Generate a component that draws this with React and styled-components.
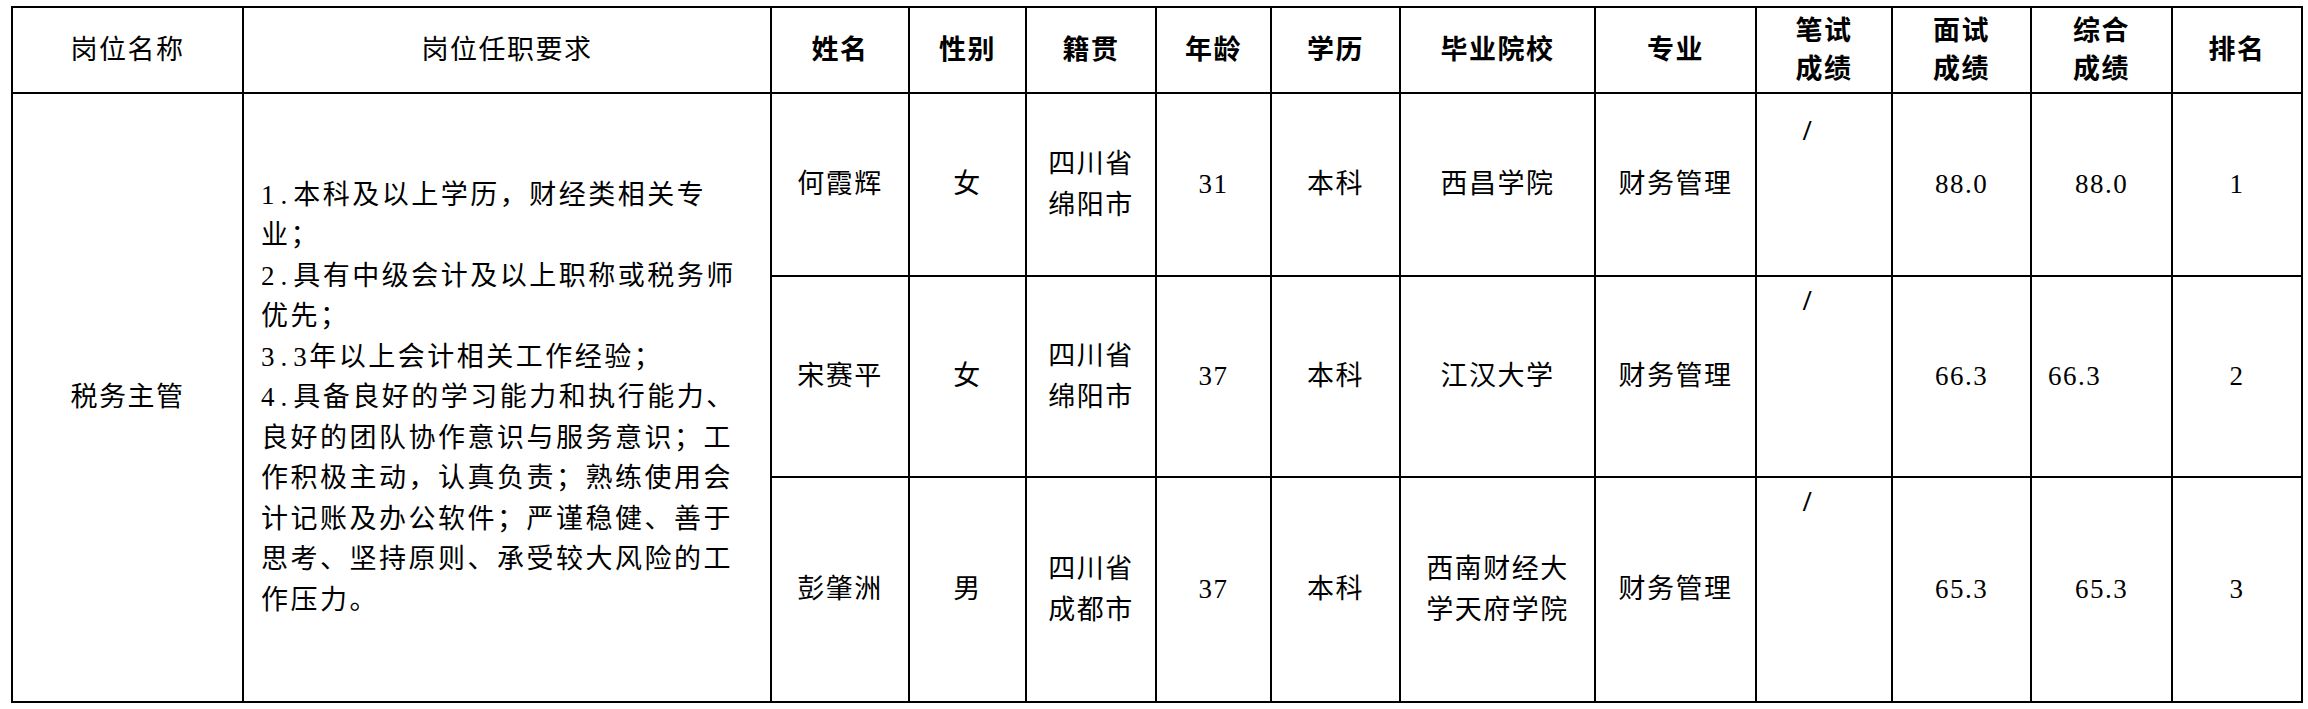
import React from 'react';
import styled, { createGlobalStyle } from 'styled-components';

const GlobalStyle = createGlobalStyle`
  html, body {
    margin: 0;
    padding: 0;
    background: #fff;
  }
  body {
    font-family: "Liberation Serif", "Noto Sans CJK SC", serif;
    color: #000;
  }
`;

const Page = styled.div`
  padding: 6px 0 0 11px;
`;

const Sheet = styled.table`
  border-collapse: collapse;
  table-layout: fixed;
  width: 2290px;
  font-size: 27px;
  letter-spacing: 1.5px;
`;

const Col = styled.col`
  width: ${p => p.$w}px;
`;

const Row = styled.tr`
  height: ${p => p.$h}px;
`;

const HeadCell = styled.th`
  border: 2px solid #000;
  padding: 0;
  font-weight: ${p => (p.$bold ? 700 : 400)};
  line-height: 38px;
  text-align: center;
  vertical-align: middle;
`;

const Cell = styled.td`
  border: 2px solid #000;
  padding: 0 0 0 ${p => p.$padLeft || 0}px;
  text-align: ${p => p.$align || 'center'};
  vertical-align: middle;
  line-height: 40.5px;
  white-space: nowrap;
`;

const SlashCell = styled.td`
  border: 2px solid #000;
  padding: ${p => p.$top}px 0 0 46px;
  text-align: left;
  vertical-align: top;
  line-height: 40.5px;
  font-size: 30px;
  font-weight: 700;
`;

const Requirements = styled.td`
  border: 2px solid #000;
  padding: 0 0 0 17px;
  text-align: left;
  vertical-align: middle;
  line-height: 40.5px;
  letter-spacing: 2.5px;
`;

const Line = styled.div`
  white-space: nowrap;
`;

const Num = styled.span`
  letter-spacing: 6px;
`;

const headers = [
  { w: 231, label: ['岗位名称'] },
  { w: 528, label: ['岗位任职要求'] },
  { w: 138, label: ['姓名'], bold: true },
  { w: 117, label: ['性别'], bold: true },
  { w: 130, label: ['籍贯'], bold: true },
  { w: 115, label: ['年龄'], bold: true },
  { w: 129, label: ['学历'], bold: true },
  { w: 195, label: ['毕业院校'], bold: true },
  { w: 161, label: ['专业'], bold: true },
  { w: 136, label: ['笔试', '成绩'], bold: true },
  { w: 139, label: ['面试', '成绩'], bold: true },
  { w: 141, label: ['综合', '成绩'], bold: true },
  { w: 130, label: ['排名'], bold: true },
];

const requirementLines = [
  ['1.', '本科及以上学历，财经类相关专'],
  ['', '业；'],
  ['2.', '具有中级会计及以上职称或税务师'],
  ['', '优先；'],
  ['3.', '3年以上会计相关工作经验；'],
  ['4.', '具备良好的学习能力和执行能力、'],
  ['', '良好的团队协作意识与服务意识；工'],
  ['', '作积极主动，认真负责；熟练使用会'],
  ['', '计记账及办公软件；严谨稳健、善于'],
  ['', '思考、坚持原则、承受较大风险的工'],
  ['', '作压力。'],
];

const candidates = [
  {
    name: '何霞辉', sex: '女', origin: ['四川省', '绵阳市'], age: '31', edu: '本科',
    school: ['西昌学院'], major: '财务管理', interview: '88.0', total: '88.0', rank: '1',
    h: 183, slashTop: 16,
  },
  {
    name: '宋赛平', sex: '女', origin: ['四川省', '绵阳市'], age: '37', edu: '本科',
    school: ['江汉大学'], major: '财务管理', interview: '66.3', total: '66.3', rank: '2',
    h: 201, slashTop: 3, totalLeft: true,
  },
  {
    name: '彭肇洲', sex: '男', origin: ['四川省', '成都市'], age: '37', edu: '本科',
    school: ['西南财经大', '学天府学院'], major: '财务管理', interview: '65.3', total: '65.3', rank: '3',
    h: 225, slashTop: 3,
  },
];

const lines = arr => arr.map(t => <Line key={t}>{t}</Line>);

const App = () => {
  return (
    <Page>
      <GlobalStyle />
      <Sheet>
        <colgroup>
          {headers.map((h, i) => <Col key={i} $w={h.w} />)}
        </colgroup>
        <thead>
          <Row $h={86}>
            {headers.map((h, i) => (
              <HeadCell key={i} $bold={h.bold}>{lines(h.label)}</HeadCell>
            ))}
          </Row>
        </thead>
        <tbody>
          {candidates.map((c, i) => (
            <Row key={c.name} $h={c.h}>
              {i === 0 && (
                <>
                  <Cell rowSpan={3}>税务主管</Cell>
                  <Requirements rowSpan={3}>
                    {requirementLines.map(([num, text]) => (
                      <Line key={text}>{num && <Num>{num}</Num>}{text}</Line>
                    ))}
                  </Requirements>
                </>
              )}
              <Cell>{c.name}</Cell>
              <Cell>{c.sex}</Cell>
              <Cell>{lines(c.origin)}</Cell>
              <Cell>{c.age}</Cell>
              <Cell>{c.edu}</Cell>
              <Cell>{lines(c.school)}</Cell>
              <Cell>{c.major}</Cell>
              <SlashCell $top={c.slashTop}>/</SlashCell>
              <Cell>{c.interview}</Cell>
              {c.totalLeft
                ? <Cell $align="left" $padLeft={16}>{c.total}</Cell>
                : <Cell>{c.total}</Cell>}
              <Cell>{c.rank}</Cell>
            </Row>
          ))}
        </tbody>
      </Sheet>
    </Page>
  );
};

export default App;
